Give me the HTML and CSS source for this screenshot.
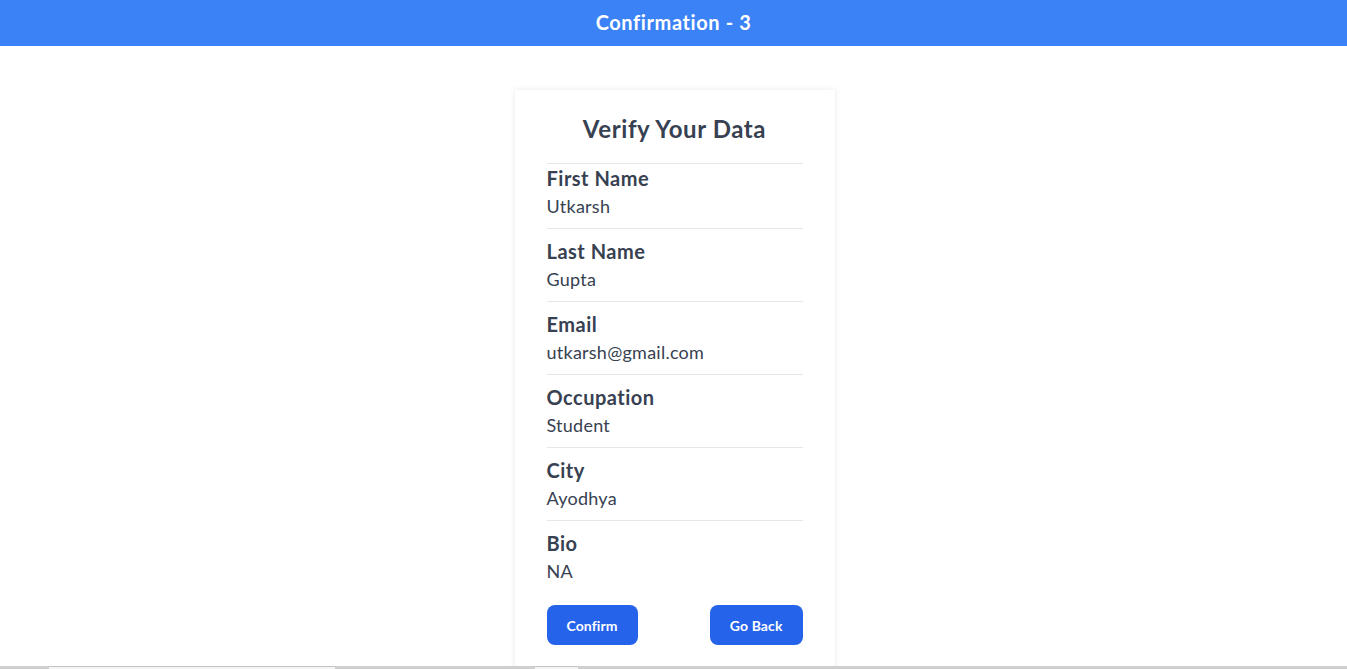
FILE: index.html
```html
<!DOCTYPE html>
<html lang="en">
<head>
<meta charset="utf-8">
<title>Confirmation - 3</title>
<link rel="stylesheet" href="styles.css">
</head>
<body>
<header class="topbar">Confirmation - 3</header>
<main class="page">
  <section class="card">
    <h1 class="card-title">Verify Your Data</h1>
    <div class="fields">
      <div class="field">
        <div class="field-label">First Name</div>
        <div class="field-value">Utkarsh</div>
      </div>
      <div class="field">
        <div class="field-label">Last Name</div>
        <div class="field-value">Gupta</div>
      </div>
      <div class="field">
        <div class="field-label">Email</div>
        <div class="field-value">utkarsh@gmail.com</div>
      </div>
      <div class="field">
        <div class="field-label">Occupation</div>
        <div class="field-value">Student</div>
      </div>
      <div class="field">
        <div class="field-label">City</div>
        <div class="field-value">Ayodhya</div>
      </div>
      <div class="field">
        <div class="field-label">Bio</div>
        <div class="field-value">NA</div>
      </div>
    </div>
    <div class="actions">
      <button class="btn" type="button">Confirm</button>
      <button class="btn" type="button">Go Back</button>
    </div>
  </section>
</main>
<div class="scrollbar">
  <span class="sb-gray sb-a"></span>
  <span class="sb-light sb-b"></span>
  <span class="sb-gray sb-c"></span>
  <span class="sb-light sb-d"></span>
  <span class="sb-gray sb-e"></span>
</div>
</body>
</html>
```
FILE: styles.css
```css
* {
  box-sizing: border-box;
}

html, body {
  margin: 0;
  padding: 0;
  background: #ffffff;
}

body {
  font-family: Lato, "Noto Sans", "Liberation Sans", sans-serif;
  color: #374151;
}

.topbar {
  height: 46px;
  padding-top: 8px;
  line-height: 28px;
  background: #3b82f6;
  color: #ffffff;
  font-size: 20px;
  font-weight: 700;
  letter-spacing: 0.6px;
  text-align: center;
}

.page {
  display: flex;
  justify-content: center;
  padding-top: 44px;
  padding-left: 2px;
}

.card {
  width: 320px;
  padding: 23px 32px 24px;
  background: #ffffff;
  box-shadow: 0 0 6px rgba(0, 0, 0, 0.09);
}

.card-title {
  margin: 0 0 18px;
  font-size: 24px;
  line-height: 32px;
  font-weight: 700;
  letter-spacing: 0.6px;
  text-align: center;
  color: #374151;
}

.fields {
  border-top: 1px solid #e5e7eb;
}

.field {
  padding-bottom: 8px;
  border-bottom: 1px solid #e5e7eb;
}

.field + .field {
  margin-top: 8px;
}

.field:last-child {
  border-bottom: none;
}

.field-label {
  font-size: 20px;
  line-height: 28px;
  font-weight: 700;
  letter-spacing: 0.5px;
  color: #374151;
}

.field-value {
  font-size: 18px;
  line-height: 28px;
  letter-spacing: 0.25px;
  color: #374151;
}

.actions {
  display: flex;
  justify-content: space-between;
  margin-top: 12px;
}

.btn {
  height: 40px;
  padding: 0 20px;
  border: none;
  border-radius: 8px;
  background: #2563eb;
  color: #ffffff;
  font-family: inherit;
  font-size: 14px;
  font-weight: 700;
  letter-spacing: 0.1px;
}

.scrollbar {
  position: fixed;
  left: 0;
  right: 0;
  bottom: 0;
  height: 3px;
  display: flex;
}

.sb-gray {
  background: #cfcfcf;
}

.sb-light {
  background: #f4f4f4;
  border-top: 1px solid #c4c4c4;
}

.sb-a { width: 49px; }
.sb-b { width: 286px; }
.sb-c { width: 200px; }
.sb-d { width: 43px; }
.sb-e { flex: 1; }
```
